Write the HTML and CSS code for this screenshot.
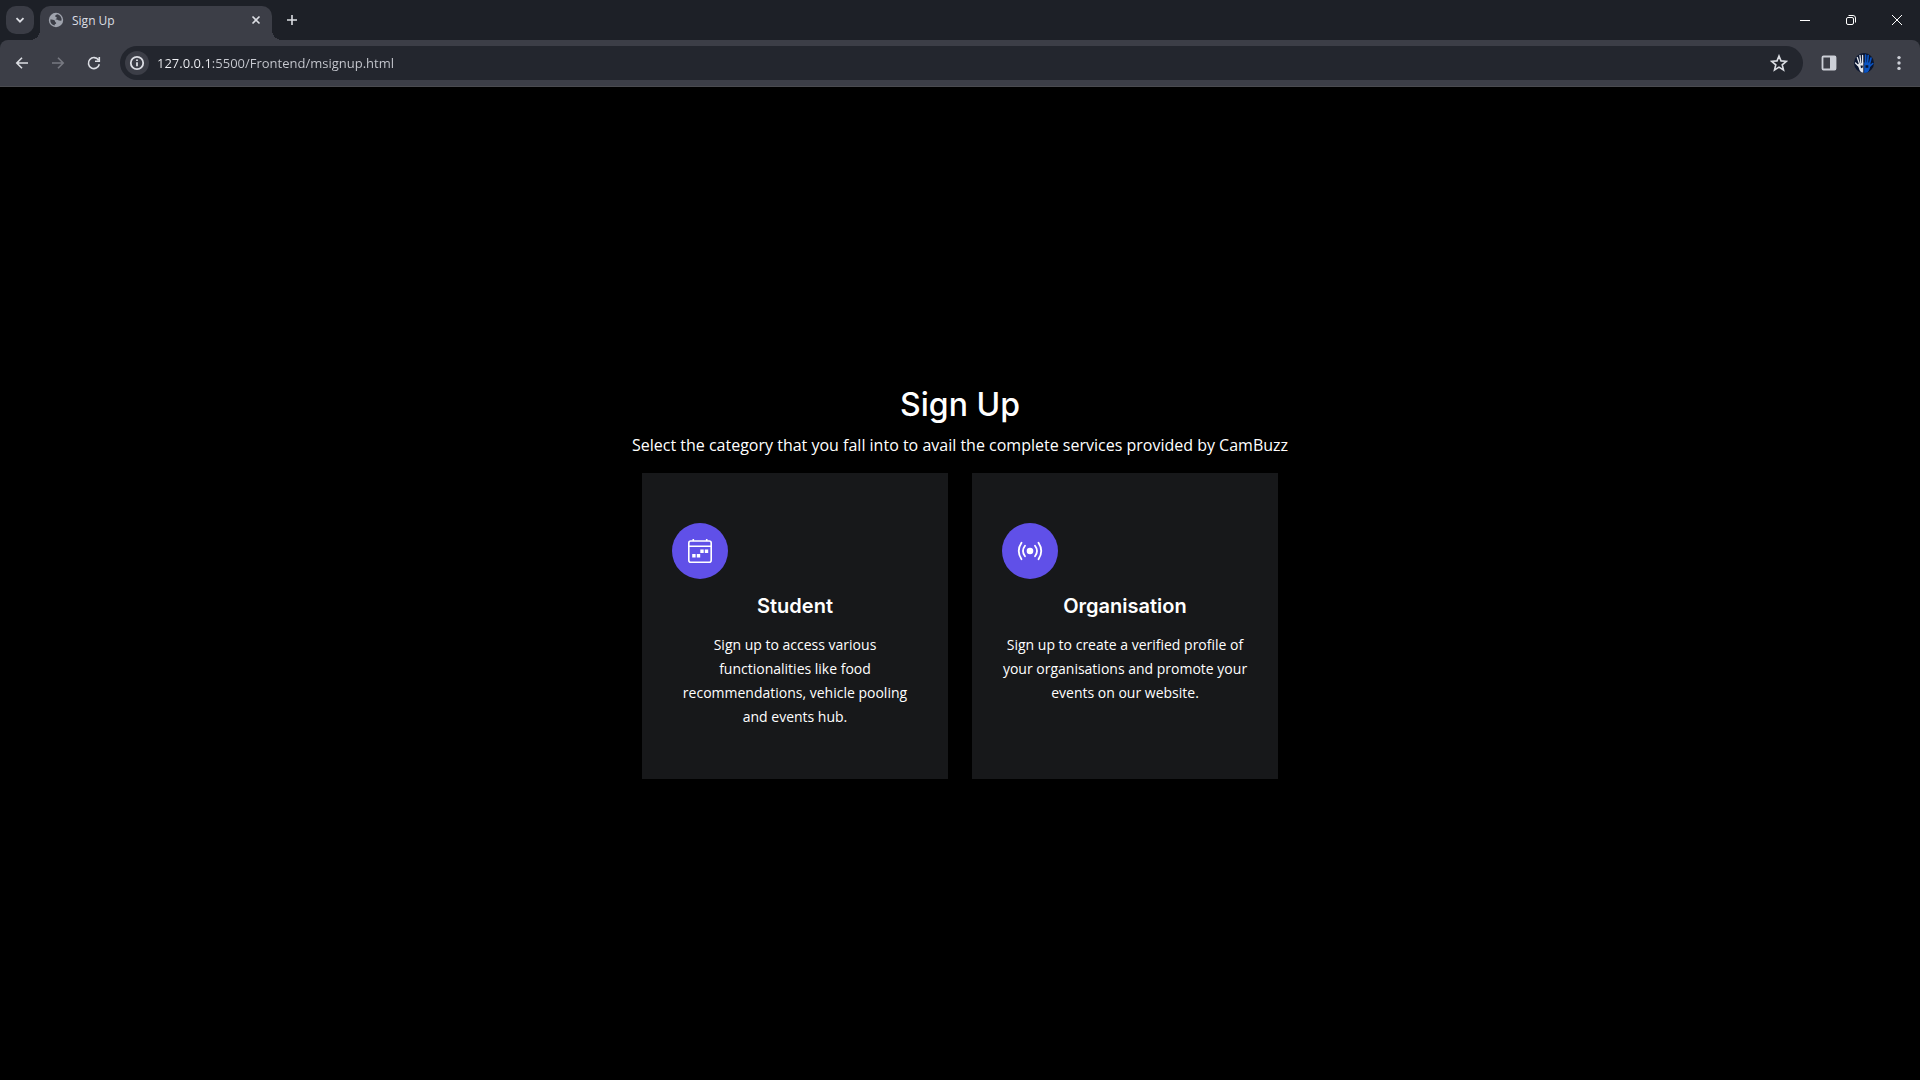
FILE: index.html
```html
<!DOCTYPE html>
<html lang="en">
<head>
<meta charset="utf-8">
<meta name="viewport" content="width=device-width, initial-scale=1">
<title>Sign Up</title>
<link rel="stylesheet" href="styles.css">
</head>
<body>
<header class="browser">
  <div class="tab-strip">
    <button class="tab-search" aria-label="Search tabs">
      <svg width="12" height="12" viewBox="0 0 12 12"><path class="line bold" d="M2.500 4.200 6 7.700l3.500-3.500"/></svg>
    </button>
    <div class="tab">
      <svg width="16" height="16" viewBox="0 0 16 16"><circle cx="8" cy="8" r="7.200" fill="#9fa3ad"/><path fill="#3c3e47" d="M9.300 2.300c-1.500.8-2.300 1.300-2.100 2.200.2.700 1.500.4 1.600 1.200.1.900-1 .9-1.200 1.700 1.300.5 2.500.1 3.100 1.100.7.200 2.400.2 2.900.1a5.700 5.700 0 0 0-4.300-6.300ZM2.300 7.600c1.700.1 3.700.2 4.400 1 .6.800.1 1.500 1.100 1.800.3.100.5.300.4.800-.2.800-1.300.8-1.500 1.300v1.100A5.800 5.800 0 0 1 2.300 7.600Z"/></svg>
      <span class="tab-title">Sign Up</span>
      <button class="tab-close" aria-label="Close tab">
        <svg width="16" height="16" viewBox="0 0 16 16"><path class="line" d="m4.500 4.500 7 7m0-7-7 7"/></svg>
      </button>
    </div>
    <button class="new-tab" aria-label="New tab">
      <svg width="16" height="16" viewBox="0 0 16 16"><path class="line" d="M8 3v10M3 8h10"/></svg>
    </button>
    <div class="window-controls">
      <button aria-label="Minimize"><svg width="12" height="12" viewBox="0 0 12 12"><path class="line thin" d="M1 6.500h10"/></svg></button>
      <button aria-label="Restore"><svg width="12" height="12" viewBox="0 0 12 12"><rect class="line thin" x="1.500" y="3.500" width="7" height="7" rx="1.500"/><path class="line thin" d="M3.500 1.500H8a2.500 2.500 0 0 1 2.500 2.500v4.500"/></svg></button>
      <button aria-label="Close"><svg width="12" height="12" viewBox="0 0 12 12"><path class="line thin" d="m1 1 10 10M11 1 1 11"/></svg></button>
    </div>
  </div>
  <div class="toolbar">
    <div class="nav">
      <button aria-label="Back"><svg width="16" height="16" viewBox="0 0 16 16"><path class="line" d="M14 8H3m5-5.200L2.800 8 8 13.200"/></svg></button>
      <button aria-label="Forward" disabled><svg width="16" height="16" viewBox="0 0 16 16"><path class="line" d="M2 8h11M8 2.800 13.200 8 8 13.200"/></svg></button>
      <button aria-label="Reload"><svg width="16" height="16" viewBox="0 0 16 16"><path class="line" d="M13.300 9.300A5.500 5.500 0 1 1 12.500 5M13.300 2v4.200H9"/></svg></button>
    </div>
    <div class="omnibox">
      <button class="site-info" aria-label="View site information">
        <svg width="16" height="16" viewBox="0 0 16 16"><circle class="line bold" cx="8" cy="8" r="6.200"/><path class="line bold" d="M8 7.300v4M8 4.400V6"/></svg>
      </button>
      <input class="url" type="text" aria-label="Address" value="127.0.0.1:5500/Frontend/msignup.html" spellcheck="false">
      <button class="bookmark" aria-label="Bookmark this tab">
        <svg width="18" height="18" viewBox="0 0 18 18"><path class="line" d="m9 2 2 4.900 5.300.4-4.100 3.500 1.300 5.100L9 13.100l-4.500 2.800 1.300-5.100-4.100-3.500L7 6.900Z"/></svg>
      </button>
    </div>
    <div class="actions">
      <button aria-label="Side panel"><svg width="16" height="16" viewBox="0 0 16 16"><rect class="line bold" x="1.500" y="1.500" width="13" height="13" rx="1"/><path fill="currentColor" d="M9 1h6v14H9z"/></svg></button>
      <button aria-label="Profile">
        <svg width="20" height="20" viewBox="0 0 20 20"><circle cx="10" cy="10" r="10" fill="#0a1530"/><path fill="none" stroke="#e4e6ea" stroke-width="1.300" stroke-linecap="round" d="M1.500 10 4 12.500M3.300 4.500 5.500 11M6 2.500 6.800 10M8.600 2.500V10"/><path fill="#e4e6ea" d="M3.300 11.500 9.300 9.500V19.800C6.500 19.600 5.500 17.500 4.800 15Z"/><path fill="none" stroke="#0b55c4" stroke-width="1.600" stroke-linecap="round" d="M11.600 2v8M14.200 2.500 13.500 10M17 5l-1.500 6M18.800 10.500 16 13"/><path fill="#0b55c4" d="M10.200 9.500h5.500l1 2.500c-1 3-1.200 6.500-3.700 7.500l-2.800.4Z"/><path fill="#0a1530" d="M11.500 12.200h2.800v2.600h-2.800ZM6.500 12.500h2.300v2l-1.800.8Z"/></svg>
      </button>
      <button aria-label="Menu"><svg width="16" height="16" viewBox="0 0 16 16" fill="currentColor"><circle cx="8" cy="2.600" r="1.700"/><circle cx="8" cy="8" r="1.700"/><circle cx="8" cy="13.400" r="1.700"/></svg></button>
    </div>
  </div>
</header>

<main class="signup">
  <h1>Sign Up</h1>
  <p class="intro">Select the category that you fall into to avail the complete services provided by CamBuzz</p>
  <div class="cards">
    <a class="card" href="#student">
      <span class="badge">
        <svg width="26" height="26" viewBox="0 0 26 26"><rect x="1.800" y="3" width="22.400" height="21.200" rx="2" fill="none" stroke="#fff" stroke-width="1.600"/><path d="M2 8.300h22M6.300 1v2M19.700 1v2" fill="none" stroke="#fff" stroke-width="1.600"/><path fill="#fff" d="M13.300 11.500h3.400v3.400h-3.400zM17.800 11.500h3.400v3.400h-3.400zM5.200 16h3.400v3.400H5.200zM9.800 16h3.400v3.400H9.800z"/></svg>
      </span>
      <h2>Student</h2>
      <p>Sign up to access various functionalities like food recommendations, vehicle pooling and events hub.</p>
    </a>
    <a class="card" href="#organisation">
      <span class="badge">
        <svg width="26" height="26" viewBox="0 0 26 26"><circle cx="13" cy="13" r="3.300" fill="#fff"/><path d="M4.500 4.800q-5.500 8.200 0 16.400M21.500 4.800q5.500 8.200 0 16.400M8 7.800q-4 5.200 0 10.400M18 7.800q4 5.200 0 10.400" fill="none" stroke="#fff" stroke-width="1.800" stroke-linecap="round"/></svg>
      </span>
      <h2>Organisation</h2>
      <p>Sign up to create a verified profile of your organisations and promote your events on our website.</p>
    </a>
  </div>
</main>
</body>
</html>
```
FILE: styles.css
```css
* { box-sizing: border-box; }

body {
  margin: 0;
  min-height: 100vh;
  display: flex;
  flex-direction: column;
  background: #000;
  color: #fff;
  font-family: "Open Sans", sans-serif;
}

h1, h2, p { margin: 0; }

button {
  display: flex;
  align-items: center;
  justify-content: center;
  padding: 0;
  border: 0;
  background: none;
  color: inherit;
}

svg { display: block; flex: none; }

.line { fill: none; stroke: currentColor; stroke-width: 1.6; }
.line.bold { stroke-width: 1.8; }
.line.thin { stroke-width: 1; }

/* Browser frame */
.browser { background: #1d2027; color: #dcdee4; }

.tab-strip {
  display: flex;
  align-items: center;
  height: 40px;
  padding-left: 6px;
}

.tab-search {
  width: 28px;
  height: 28px;
  border-radius: 10px;
  background: #3a3c45;
}

.tab {
  position: relative;
  display: flex;
  align-items: center;
  gap: 8px;
  width: 232px;
  height: 34px;
  margin-left: 6px;
  padding: 0 8px 6px;
  align-self: flex-end;
  border-radius: 10px 10px 0 0;
  background: #3c3e47;
  font-size: 12px;
}

/* Flared feet where the tab meets the toolbar */
.tab::before,
.tab::after {
  content: "";
  position: absolute;
  bottom: 0;
  width: 10px;
  height: 10px;
}
.tab::before { right: 100%; background: radial-gradient(circle at 0 0, transparent 10px, #3c3e47 10px); }
.tab::after { left: 100%; background: radial-gradient(circle at 100% 0, transparent 10px, #3c3e47 10px); }

.tab-title { flex: 1; }
.new-tab { width: 28px; height: 28px; margin-left: 6px; }
.window-controls { display: flex; margin-left: auto; color: #fff; }
.window-controls button { width: 46px; height: 40px; }

.toolbar {
  display: flex;
  align-items: center;
  height: 47px;
  padding: 0 4px 0 5px;
  border-bottom: 1px solid #4a4b50;
  border-radius: 8px 8px 0 0;
  background: #3c3e47;
}

.nav { display: flex; gap: 2px; padding-right: 9px; }
.nav button { width: 34px; height: 34px; }
.nav button:disabled { color: #777982; }

.omnibox {
  flex: 1;
  display: flex;
  align-items: center;
  height: 34px;
  padding: 0 15px 0 5px;
  border-radius: 17px;
  background: #23262e;
}

.site-info { width: 24px; height: 24px; border-radius: 50%; background: #3c3e47; }

.url {
  flex: 1;
  min-width: 0;
  margin-left: 8px;
  padding: 0;
  border: 0;
  outline: 0;
  /* Host is brighter than the rest of the address */
  background: linear-gradient(90deg, #f2f3f7 55px, #c9cbd2 55px) text;
  color: transparent;
  font: 13px/24px "Open Sans", sans-serif;
}

.actions { display: flex; gap: 1px; padding-left: 9px; color: #cdd0d8; }
.actions button { width: 34px; height: 34px; }

/* Sign-up page */
.signup {
  flex: 1;
  display: flex;
  flex-direction: column;
  align-items: center;
  justify-content: center;
  padding: 0 16px 4px;
  text-align: center;
}

.signup h1 {
  margin-bottom: 8px;
  font: 500 32px/40px Inter, sans-serif;
}

.intro { margin-bottom: 16px; font-size: 16px; line-height: 24px; }

.cards { display: flex; flex-wrap: wrap; justify-content: center; gap: 24px; }

.card {
  display: flex;
  flex-direction: column;
  gap: 15px;
  width: 306px;
  padding: 50px 30px;
  background: #17181a;
  color: inherit;
  text-decoration: none;
}

.badge {
  display: flex;
  align-items: center;
  justify-content: center;
  width: 56px;
  height: 56px;
  border-radius: 50%;
  background: #6050e8;
}

.card h2 { font: 600 20px/24px Inter, sans-serif; }
.card p { font-size: 14px; line-height: 24px; }
```
